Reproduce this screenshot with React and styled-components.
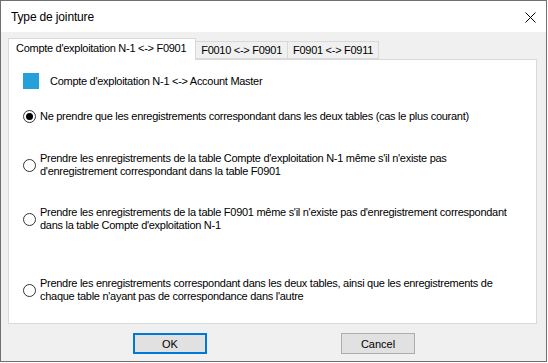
import React, { useState } from "react";
import styled, { createGlobalStyle } from "styled-components";

const GlobalStyle = createGlobalStyle`
  html, body {
    margin: 0;
    padding: 0;
    background: #ffffff;
  }
  body {
    font-family: "Liberation Sans", Arial, sans-serif;
    font-size: 11px;
    letter-spacing: -0.28px;
    color: #000000;
  }
`;

const tabs = [
  "Compte d'exploitation N-1 <-> F0901",
  "F0010 <-> F0901",
  "F0901 <-> F0911",
];

// espacement au-dessus de chaque option, repris de la capture
const options = [
  {
    top: 21,
    lines: ["Ne prendre que les enregistrements correspondant dans les deux tables (cas le plus courant)"],
  },
  {
    top: 29,
    lines: [
      "Prendre les enregistrements de la table Compte d'exploitation N-1 même s'il n'existe pas",
      "d'enregistrement correspondant dans la table F0901",
    ],
  },
  {
    top: 28,
    lines: [
      "Prendre les enregistrements de la table F0901 même s'il n'existe pas d'enregistrement correspondant",
      "dans la table Compte d'exploitation N-1",
    ],
  },
  {
    top: 45,
    lines: [
      "Prendre les enregistrements correspondant dans les deux tables, ainsi que les enregistrements de",
      "chaque table n'ayant pas de correspondance dans l'autre",
    ],
  },
];

function App() {
  const [tab, setTab] = useState(0);
  const [choice, setChoice] = useState(0);

  return (
    <>
      <GlobalStyle />
      <Window>
        <TitleBar>
          <Title>Type de jointure</Title>
          <CloseBtn>
            <svg width="11" height="11" viewBox="0 0 11 11">
              <path d="M0.5 0.5 L10.5 10.5 M10.5 0.5 L0.5 10.5" stroke="#000" strokeWidth="1" />
            </svg>
          </CloseBtn>
        </TitleBar>
        <Body>
          <TabStrip>
            {tabs.map((t, i) => (
              <Tab key={t} $active={i === tab} onClick={() => setTab(i)}>
                {t}
              </Tab>
            ))}
          </TabStrip>
          <Panel>
            <Legend>
              <Swatch />
              <span>Compte d'exploitation N-1 &lt;-&gt; Account Master</span>
            </Legend>
            {options.map((o, i) => (
              <Option key={i} $top={o.top} onClick={() => setChoice(i)}>
                <Radio $checked={choice === i} />
                <Label>
                  {o.lines.map((l, j) => (
                    <div key={j}>{l}</div>
                  ))}
                </Label>
              </Option>
            ))}
          </Panel>
          <Buttons>
            <Button $primary>OK</Button>
            <Button>Cancel</Button>
          </Buttons>
        </Body>
      </Window>
    </>
  );
}

export default App;

const Window = styled.div`
  width: 547px;
  height: 362px;
  box-sizing: border-box;
  border: 1px solid #707070;
  background: #f0f0f0;
  display: flex;
  flex-direction: column;
`;

const TitleBar = styled.div`
  height: 31px;
  background: #ffffff;
  display: flex;
  align-items: center;
  justify-content: space-between;
  padding: 0 10px 0 10px;
`;

const Title = styled.div`
  font-family: "Liberation Sans", Arial, sans-serif;
  font-size: 12px;
  letter-spacing: -0.15px;
  color: #000000;
`;

const CloseBtn = styled.div`
  display: flex;
  align-items: center;
  padding-top: 1px;
`;

const Body = styled.div`
  flex: 1;
  display: flex;
  flex-direction: column;
  padding: 6px 9px 0 7px;
`;

const TabStrip = styled.div`
  display: flex;
  align-items: flex-end;
  height: 21px;
  position: relative;
  z-index: 1;
`;

const Tab = styled.div`
  box-sizing: border-box;
  height: ${(p) => (p.$active ? "22px" : "18px")};
  margin-bottom: ${(p) => (p.$active ? "-1px" : "0")};
  padding: ${(p) => (p.$active ? "2px 9px 0 7px" : "1px 5px 0 5px")};
  background: ${(p) => (p.$active ? "#ffffff" : "#f0f0f0")};
  border: 1px solid #d9d9d9;
  border-bottom: ${(p) => (p.$active ? "none" : "1px solid #d9d9d9")};
  margin-left: -1px;
  white-space: nowrap;
  line-height: 14px;
  cursor: default;
  &:first-child {
    margin-left: 0;
  }
`;

const Panel = styled.div`
  height: 265px;
  box-sizing: border-box;
  background: #ffffff;
  border: 1px solid #d9d9d9;
  padding: 13px 0 0 14px;
  display: flex;
  flex-direction: column;
`;

const Legend = styled.div`
  display: flex;
  align-items: center;
  gap: 11px;
  height: 16px;
`;

const Swatch = styled.div`
  width: 16px;
  height: 16px;
  background: #26a0da;
`;

const Option = styled.div`
  display: flex;
  align-items: center;
  gap: 4px;
  margin-top: ${(p) => p.$top}px;
  cursor: default;
`;

const Radio = styled.span`
  width: 13px;
  height: 13px;
  box-sizing: border-box;
  border: 1px solid #333333;
  border-radius: 50%;
  background: #ffffff;
  display: flex;
  align-items: center;
  justify-content: center;
  flex-shrink: 0;
  &::after {
    content: "";
    width: 7px;
    height: 7px;
    border-radius: 50%;
    background: #000000;
    display: ${(p) => (p.$checked ? "block" : "none")};
  }
`;

const Label = styled.div`
  line-height: 13px;
  white-space: nowrap;
`;

const Buttons = styled.div`
  display: flex;
  justify-content: center;
  gap: 134px;
  padding: 9px 0 0 3px;
`;

const Button = styled.button`
  width: 74px;
  height: 21px;
  box-sizing: border-box;
  font-family: "Liberation Sans", Arial, sans-serif;
  font-size: 11px;
  letter-spacing: 0;
  color: #000000;
  background: #e1e1e1;
  border: ${(p) => (p.$primary ? "2px solid #0078d7" : "1px solid #adadad")};
  padding: 0;
  outline: none;
`;
